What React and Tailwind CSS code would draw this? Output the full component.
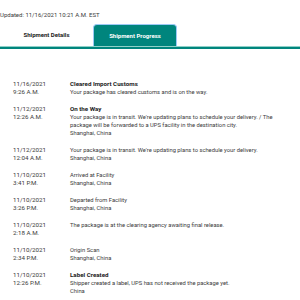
import React from 'react';

const events = [
  { date: '11/16/2021', time: '9:26 A.M.', title: 'Cleared Import Customs', lines: ['Your package has cleared customs and is on the way.'] },
  {
    date: '11/12/2021',
    time: '12:26 A.M.',
    title: 'On the Way',
    lines: [
      "Your package is in transit. We're updating plans to schedule your delivery. / The",
      'package will be forwarded to a UPS facility in the destination city.',
      'Shanghai, China',
    ],
  },
  { date: '11/12/2021', time: '12:04 A.M.', lines: ["Your package is in transit. We're updating plans to schedule your delivery.", 'Shanghai, China'] },
  { date: '11/10/2021', time: '3:41 P.M.', lines: ['Arrived at Facility', 'Shanghai, China'] },
  { date: '11/10/2021', time: '3:26 P.M.', lines: ['Departed from Facility', 'Shanghai, China'] },
  { date: '11/10/2021', time: '2:18 A.M.', lines: ['The package is at the clearing agency awaiting final release.'] },
  { date: '11/10/2021', time: '2:34 P.M.', lines: ['Origin Scan', 'Shanghai, China'] },
  { date: '11/10/2021', time: '12:26 P.M.', title: 'Label Created', lines: ['Shipper created a label, UPS has not received the package yet.', 'China'] },
];

const App = () => {
  return (
    <div className="w-[300px] h-[300px] overflow-hidden bg-white text-[#3a3a3a] text-[5.8px] leading-[8px]" style={{ fontFamily: 'Roboto, "Liberation Sans", sans-serif' }}>
      {/* Updated line */}
      <div className="h-[24px] pt-[11px] text-[6px]">Updated: 11/16/2021 10:21 A.M. EST</div>

      {/* Tabs */}
      <div className="flex h-[22px] relative text-[6px]">
        <div className="w-[93px] flex items-center justify-center font-bold text-[#222]">Shipment Details</div>
        <div className="w-[84px] flex items-center justify-center font-bold text-white bg-[#00857d] rounded-t-[4px] border border-b-0 border-[#9cc9f5]">
          Shipment Progress
        </div>
      </div>
      <div className="h-px bg-[#8fd0c8]" />
      <div className="h-[2px] bg-[#00857d]" />

      {/* Progress list */}
      <div className="flex flex-col gap-[9px] pt-[31px] pl-[13px]">
        {events.map((ev, i) => (
          <div key={i} className="flex">
            <div className="w-[57px] shrink-0 text-[6.2px]">
              <div>{ev.date}</div>
              <div>{ev.time}</div>
            </div>
            <div className="whitespace-nowrap">
              {ev.title && <div className="font-bold text-[#222] text-[6.2px]">{ev.title}</div>}
              {ev.lines.map((l, j) => (
                <div key={j}>{l}</div>
              ))}
            </div>
          </div>
        ))}
      </div>
    </div>
  );
};

export default App;
